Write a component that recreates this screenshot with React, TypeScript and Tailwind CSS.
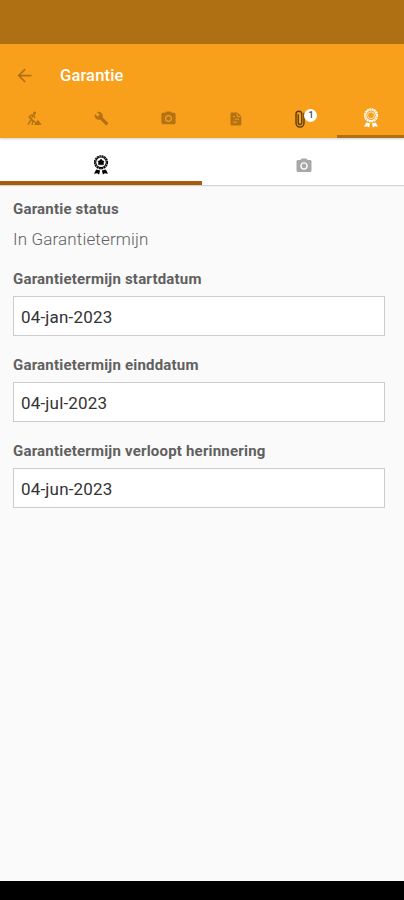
import type { ReactNode } from "react";
import { MdArrowBack, MdBuild, MdPhotoCamera } from "react-icons/md";

type DateField = {
  id: string;
  label: string;
  value: string;
};

const dateFields: DateField[] = [
  { id: "start", label: "Garantietermijn startdatum", value: "04-jan-2023" },
  { id: "end", label: "Garantietermijn einddatum", value: "04-jul-2023" },
  {
    id: "reminder",
    label: "Garantietermijn verloopt herinnering",
    value: "04-jun-2023",
  },
];

function DiggingIcon() {
  return (
    <svg width="15" height="15" viewBox="0 0 15 15" fill="none">
      <circle cx="7.6" cy="1.9" r="1.5" fill="currentColor" />
      <path
        d="M6.4 4L4 8l1.8 2.2-.7 3.6M4.2 8.6L1 13.6M1.6 6.4L4.4 4h2.4l1.2 3.2M2.2 6.6l7 5.4"
        stroke="currentColor"
        strokeWidth="1.4"
        strokeLinejoin="round"
      />
      <path d="M7 13.9l4-5.2 3.6 5.2z" fill="currentColor" />
    </svg>
  );
}

function DocumentIcon() {
  return (
    <svg width="12" height="14" viewBox="0 0 12 14" fill="none">
      <path
        d="M1.8.5h5.7l3.8 3.7v8a1.3 1.3 0 0 1-1.3 1.3H1.8A1.3 1.3 0 0 1 .5 12.2V1.8A1.3 1.3 0 0 1 1.8.5z"
        fill="currentColor"
      />
      <path
        d="M7.2 1.3v3.2h3.2M3 4.5h2M5 7.2h4M3 10.2h4"
        stroke="#f8a01b"
        strokeWidth="0.9"
      />
    </svg>
  );
}

function RibbonIcon({ filled = false }: { filled?: boolean }) {
  return (
    <svg width="16" height="20" viewBox="0 0 16 20" fill="none">
      <circle
        cx="8"
        cy="7.3"
        r="6.4"
        stroke="currentColor"
        strokeWidth="1.4"
        strokeDasharray="2 0.51"
      />
      <circle cx="8" cy="7.3" r="5.3" stroke="currentColor" strokeWidth="1.1" />
      {filled ? (
        <path
          d="M8 4l1.3 1.4 1.7.8-.5 1.5v2.1h-5V7.7L5 6.2l1.7-.8z"
          fill="currentColor"
          stroke="currentColor"
          strokeWidth="0.4"
        />
      ) : (
        <circle cx="8" cy="7.3" r="3.4" stroke="currentColor" strokeWidth="0.7" />
      )}
      <path
        d="M3.2 14.6l3.9.8-1 4-1.9-1.1-3.2.5zM12.8 14.6l-3.9.8 1 4 1.9-1.1 3.2.5z"
        fill="currentColor"
      />
    </svg>
  );
}

function PaperclipIcon() {
  return (
    <svg width="10" height="18" viewBox="0 0 10 18" fill="none">
      <path
        d="M3.2 4.6v8.1a1.8 1.8 0 0 0 3.6 0V4.2a2.9 2.9 0 0 0-5.8 0v8.9a4 4 0 0 0 8 0V3.2"
        stroke="currentColor"
        strokeWidth="1.4"
        strokeLinecap="round"
      />
    </svg>
  );
}

function Tab({
  children,
  active = false,
}: {
  children: ReactNode;
  active?: boolean;
}) {
  return (
    <button
      type="button"
      className={
        active
          ? "flex h-full items-center justify-center border-b-[3px] border-[#b16f12] pt-[3px] pl-[2px] text-white"
          : "flex h-full items-center justify-center pt-px pl-px text-[#b37314]"
      }
    >
      {children}
    </button>
  );
}

export default function App() {
  return (
    <div className="flex h-[900px] w-[404px] flex-col bg-[#fafafa] font-['Roboto',sans-serif]">
      <div className="h-11 shrink-0 bg-[#af7013]" />

      <header className="relative z-10 h-[94px] shrink-0 bg-[#f8a01b] shadow-[0_1px_2px_rgba(0,0,0,0.2)]">
        <div className="flex h-[54px] items-center pt-[9px] pl-[14px]">
          <MdArrowBack size={21} className="text-[#b37314]" />
          <h1 className="mt-[2px] ml-[25px] text-[16.5px] font-medium tracking-[0.15px] text-white">
            Garantie
          </h1>
        </div>

        <nav className="grid h-10 grid-cols-6">
          <Tab>
            <DiggingIcon />
          </Tab>
          <Tab>
            <MdBuild size={15} />
          </Tab>
          <Tab>
            <MdPhotoCamera size={17} />
          </Tab>
          <Tab>
            <DocumentIcon />
          </Tab>
          <Tab>
            <span className="relative -ml-[6px] text-[#5c3c0c]">
              <PaperclipIcon />
              <span className="absolute -top-px left-[9px] flex size-[13px] items-center justify-center rounded-full bg-white pt-px text-[9px] leading-none font-medium text-[#444]">
                1
              </span>
            </span>
          </Tab>
          <Tab active>
            <RibbonIcon />
          </Tab>
        </nav>
      </header>

      <nav className="grid h-[47px] shrink-0 grid-cols-2 bg-white shadow-[0_1px_1px_rgba(0,0,0,0.16)]">
        <button
          type="button"
          className="flex items-center justify-center border-b-4 border-[#a85c0b] pt-[11px] text-black"
        >
          <RibbonIcon filled />
        </button>
        <button
          type="button"
          className="flex items-center justify-center pt-[9px] pl-[2px] text-[#a8a8a8]"
        >
          <MdPhotoCamera size={18} />
        </button>
      </nav>

      <main className="flex-1 pt-[14px] pr-[19px] pl-[13px]">
        <h2 className="text-[15px] leading-5 font-bold tracking-[0.2px] text-[#606060]">
          Garantie status
        </h2>
        <p className="mt-[10px] text-[17px] leading-5 font-light tracking-[0.15px] text-[#606060]">
          In Garantietermijn
        </p>

        <form className="mt-5 space-y-[19px]">
          {dateFields.map((field) => (
            <div key={field.id}>
              <label
                htmlFor={field.id}
                className="block text-[15px] leading-5 font-bold tracking-[0.2px] text-[#606060]"
              >
                {field.label}
              </label>
              <input
                id={field.id}
                defaultValue={field.value}
                className="mt-[7px] block h-10 w-full border border-[#cccccc] bg-white px-[7px] pt-[2px] text-[17px] tracking-[0.18px] text-[#333]"
              />
            </div>
          ))}
        </form>
      </main>

      <footer className="h-[19px] shrink-0 bg-black" />
    </div>
  );
}
